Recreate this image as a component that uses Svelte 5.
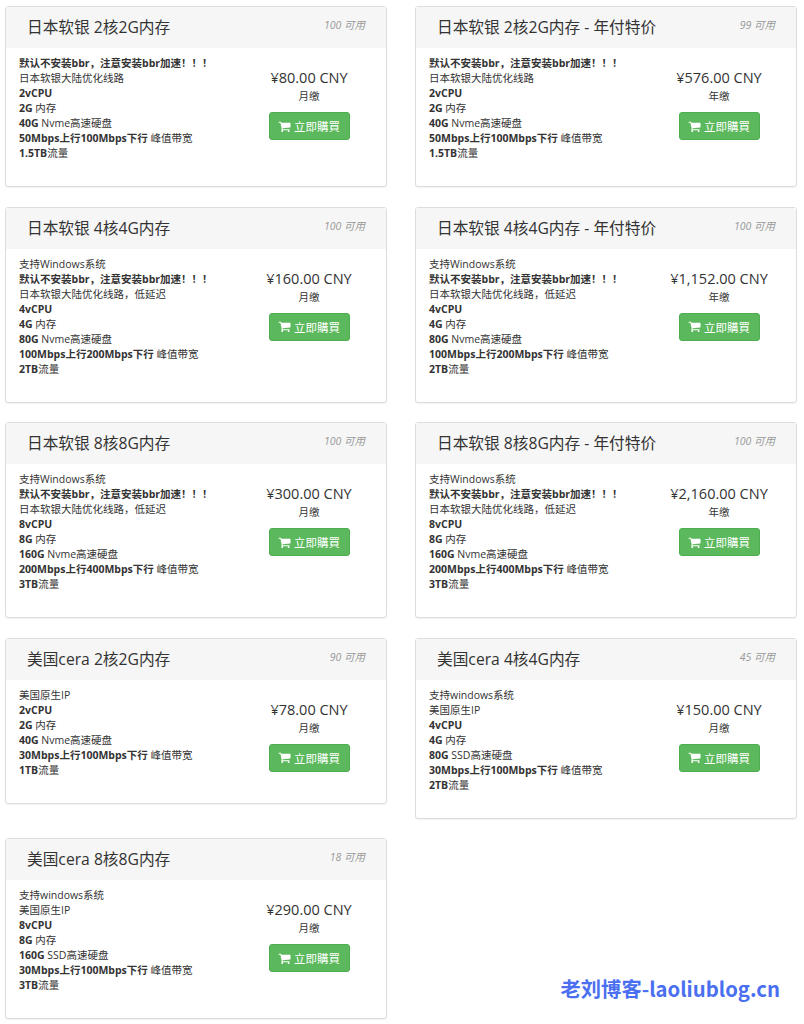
<script>
  const bbr = { b: "默认不安装bbr，注意安装bbr加速！！！" };
  const win = { t: "支持Windows系统" };
  const winLow = { t: "支持windows系统" };
  const jpA = { t: "日本软银大陆优化线路" };
  const jpB = { t: "日本软银大陆优化线路，低延迟" };
  const usIp = { t: "美国原生IP" };

  // shared spec rows: cpu, ram, disk, bandwidth, traffic
  function specs(cpu, ram, disk, up, down, traffic) {
    return [
      { b: `${cpu}vCPU` },
      { b: `${ram}G`, t: " 内存" },
      { b: disk[0], t: " " + disk[1] },
      { b: `${up}Mbps上行${down}Mbps下行`, t: " 峰值带宽" },
      { b: `${traffic}`, t: "流量" },
    ];
  }

  const jp2 = [bbr, jpA, ...specs(2, 2, ["40G", "Nvme高速硬盘"], 50, 100, "1.5TB")];
  const jp4 = [win, bbr, jpB, ...specs(4, 4, ["80G", "Nvme高速硬盘"], 100, 200, "2TB")];
  const jp8 = [win, bbr, jpB, ...specs(8, 8, ["160G", "Nvme高速硬盘"], 200, 400, "3TB")];

  const plans = [
    { title: "日本软银 2核2G内存", stock: 100, price: "¥80.00 CNY", cycle: "月缴", lines: jp2 },
    { title: "日本软银 2核2G内存 - 年付特价", stock: 99, price: "¥576.00 CNY", cycle: "年缴", lines: jp2 },
    { title: "日本软银 4核4G内存", stock: 100, price: "¥160.00 CNY", cycle: "月缴", lines: jp4 },
    { title: "日本软银 4核4G内存 - 年付特价", stock: 100, price: "¥1,152.00 CNY", cycle: "年缴", lines: jp4 },
    { title: "日本软银 8核8G内存", stock: 100, price: "¥300.00 CNY", cycle: "月缴", lines: jp8 },
    { title: "日本软银 8核8G内存 - 年付特价", stock: 100, price: "¥2,160.00 CNY", cycle: "年缴", lines: jp8 },
    {
      title: "美国cera 2核2G内存", stock: 90, price: "¥78.00 CNY", cycle: "月缴",
      lines: [usIp, ...specs(2, 2, ["40G", "Nvme高速硬盘"], 30, 100, "1TB")],
    },
    {
      title: "美国cera 4核4G内存", stock: 45, price: "¥150.00 CNY", cycle: "月缴",
      lines: [winLow, usIp, ...specs(4, 4, ["80G", "SSD高速硬盘"], 30, 100, "2TB")],
    },
    {
      title: "美国cera 8核8G内存", stock: 18, price: "¥290.00 CNY", cycle: "月缴",
      lines: [winLow, usIp, ...specs(8, 8, ["160G", "SSD高速硬盘"], 30, 100, "3TB")],
    },
  ];
</script>

<div class="page">
  {#each plans as plan}
    <div class="card">
      <header>
        <h3>{plan.title}</h3>
        <span class="stock">{plan.stock} 可用</span>
      </header>
      <div class="body">
        <div class="desc">
          {#each plan.lines as line}
            <div class="line">{#if line.b}<strong>{line.b}</strong>{/if}{line.t ?? ""}</div>
          {/each}
        </div>
        <div class="order">
          <div class="price">{plan.price}</div>
          <div class="cycle">{plan.cycle}</div>
          <button type="button">
            <svg viewBox="0 0 1792 1792" width="13" height="13" aria-hidden="true">
              <path fill="currentColor" d="M704 1536q0 52-38 90t-90 38-90-38-38-90 38-90 90-38 90 38 38 90zm896 0q0 52-38 90t-90 38-90-38-38-90 38-90 90-38 90 38 38 90zm128-1088v512q0 24-16.5 42.5t-40.5 21.5l-1044 122q13 60 13 70 0 16-24 64h920q26 0 45 19t19 45-19 45-45 19h-1024q-26 0-45-19t-19-45q0-11 8-31.5t16-36 21.5-40 15.5-29.5l-177-823h-204q-26 0-45-19t-19-45 19-45 45-19h256q16 0 28.5 6.5t19.5 15.5 13 24.5 8 26 5.5 29.5 4.5 26h1201q26 0 45 19t19 45z"/>
            </svg>
            立即購買
          </button>
        </div>
      </div>
    </div>
  {/each}
  <div class="mark">老刘博客-laoliublog.cn</div>
</div>

<style>
  :global(body) {
    background: #fff;
  }

  .page {
    position: relative;
    display: grid;
    grid-template-columns: 382px 382px;
    column-gap: 28px;
    row-gap: 19.5px;
    align-items: start;
    align-content: start;
    height: 1024px;
    box-sizing: border-box;
    padding: 6px 0 0 5px;
    font-family: "Open Sans", "Noto Sans CJK SC", sans-serif;
    font-size: 10.5px;
    line-height: 15px;
    color: #333;
    overflow: hidden;
  }

  .card {
    border: 1px solid #ddd;
    border-radius: 3px;
    box-shadow: 0 1px 1px rgba(0, 0, 0, 0.05);
    background: #fff;
  }

  header {
    display: flex;
    justify-content: space-between;
    height: 41px;
    padding: 0 21px 0 21px;
    background: #f6f6f6;
  }

  h3 {
    margin: 0;
    padding-top: 10px;
    font-size: 15.7px;
    line-height: 21px;
    font-weight: 400;
    color: #333;
  }

  .stock {
    padding-top: 11px;
    font-size: 10.5px;
    line-height: 15px;
    font-style: italic;
    color: #999;
  }

  .body {
    display: flex;
    padding: 8px 15px 25px 13px;
  }

  .desc {
    flex: 1;
  }

  /* fixed height: the CJK fallback would otherwise stretch the line box */
  .line {
    height: 15px;
  }

  strong {
    font-weight: 700;
  }

  .order {
    width: 124px;
    display: flex;
    flex-direction: column;
    align-items: center;
  }

  .price {
    margin-top: 11px;
    font-size: 14.5px;
    line-height: 22px;
    white-space: nowrap;
  }

  .cycle {
    font-size: 10.5px;
    line-height: 15px;
  }

  button {
    margin-top: 8px;
    width: 81px;
    height: 28px;
    padding: 0;
    display: flex;
    align-items: center;
    justify-content: center;
    gap: 3px;
    border: 1px solid #4cae4c;
    border-radius: 3px;
    background: #5cb85c;
    color: #fff;
    font-family: inherit;
    font-size: 11.5px;
  }

  .mark {
    position: absolute;
    right: 24px;
    top: 974px;
    font-size: 20.3px;
    line-height: 28px;
    font-weight: 600;
    color: #4a6ff0;
    font-family: "Noto Sans CJK SC", "Open Sans", sans-serif;
  }
</style>
